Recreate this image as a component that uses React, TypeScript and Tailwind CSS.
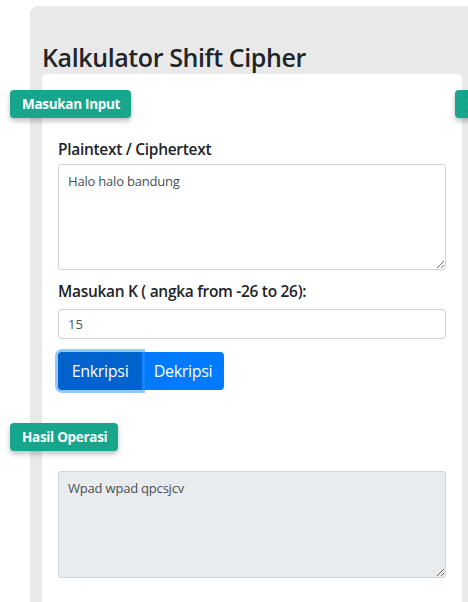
import React from "react";

const font = { fontFamily: '"Open Sans", "Noto Sans", Arial, sans-serif' };

function Badge({ children, className = "" }: { children: React.ReactNode; className?: string }) {
  return (
    <div
      className={
        "absolute h-[28px] flex items-center rounded-[4px] bg-[#17a68b] text-white font-bold text-[13.5px] px-[12px] shadow-[0_3px_5px_rgba(0,0,0,0.25)] tracking-[-0.3px] whitespace-nowrap " +
        className
      }
    >
      {children}
    </div>
  );
}

export default function App() {
  return (
    <div className="relative w-[468px] h-[602px] overflow-hidden bg-white text-[#212529]" style={font}>
      <div className="ml-[30px] mt-[6px] w-[460px] h-[700px] bg-[#e9e9e9] rounded-tl-[8px] pl-[12px] pt-[36px]">
        <h1 className="text-[25px] leading-[30px] font-semibold tracking-[-0.4px] h-[32px]">Kalkulator Shift Cipher</h1>
        <div className="w-[420px] h-[600px] bg-white rounded-[4px] px-[16px] pt-[64px]">
          <label className="block text-[15.5px] leading-[22px] font-semibold tracking-[-0.3px] mb-[4px]">Plaintext / Ciphertext</label>
          <textarea
            readOnly
            value="Halo halo bandung"
            className="block w-full h-[106px] border border-[#ced4da] rounded-[3px] px-[9px] py-[6px] text-[13px] leading-[20px] text-[#495057] tracking-[-0.2px] outline-none"
          />
          <label className="block mt-[10px] text-[15.5px] leading-[22px] font-semibold tracking-[-0.3px] mb-[7px]">
            Masukan K ( angka from -26 to 26):
          </label>
          <input
            readOnly
            value="15"
            className="block w-full h-[30px] border border-[#ced4da] rounded-[3px] px-[9px] text-[13px] text-[#495057] outline-none"
          />
          <div className="flex mt-[13px]">
            <button className="h-[38px] w-[84px] bg-[#0062cc] text-white text-[16px] rounded-l-[4px] shadow-[0_0_0_3px_rgba(38,143,255,0.5)] relative z-10 tracking-[-0.3px]">
              Enkripsi
            </button>
            <button className="h-[38px] w-[82px] bg-[#007bff] text-white text-[16px] rounded-r-[4px] tracking-[-0.3px]">
              Dekripsi
            </button>
          </div>
          <textarea
            readOnly
            value="Wpad wpad qpcsjcv"
            className="block mt-[81px] w-full h-[107px] border border-[#ced4da] rounded-[3px] px-[9px] py-[6px] text-[13px] leading-[20px] text-[#495057] bg-[#e9ecef] tracking-[-0.2px] outline-none"
          />
        </div>
      </div>
      <Badge className="left-[10px] top-[90px] w-[121px]">Masukan Input</Badge>
      <Badge className="left-[455px] top-[90px] w-[100px]">Masukan</Badge>
      <Badge className="left-[10px] top-[423px] w-[108px]">Hasil Operasi</Badge>
    </div>
  );
}
